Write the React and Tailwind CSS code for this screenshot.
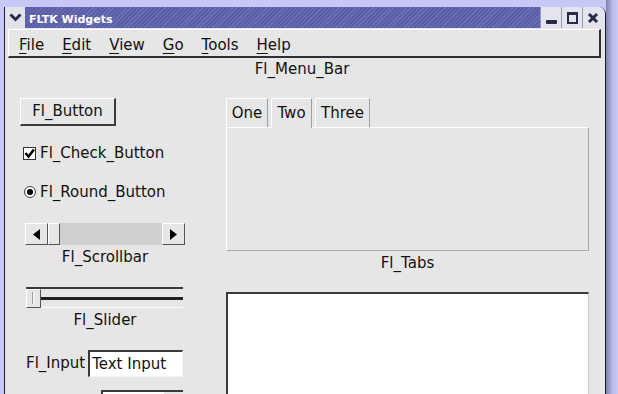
import React from 'react';

const FONT = { fontFamily: '"DejaVu Sans", Verdana, sans-serif' };

function MenuItem({ first, rest }) {
    return (
        <span className="text-[15px] text-[#111] leading-none">
            <span className="underline underline-offset-[3px] decoration-1">{first}</span>
            {rest}
        </span>
    );
}

function TitleButton({ children }) {
    return (
        <div className="w-[21px] h-full bg-[#e4e4ec] border-l border-[#9a9ab8] flex items-center justify-center">
            {children}
        </div>
    );
}

const raised = 'border-t border-l border-white border-b border-r border-b-[#555] border-r-[#555]';

export default function App() {
    return (
        <div className="w-[618px] h-[394px] overflow-hidden bg-[#c8c8f6] flex" style={FONT}>
            {/* window */}
            <div className="ml-[4px] mt-[7px] w-[602px] h-[400px] shrink-0 bg-[#e6e6e6] border-l border-r border-[#1c1c2c] rounded-tr-[7px] overflow-hidden">
                {/* title bar */}
                <div className="h-[21px] flex items-center bg-[repeating-linear-gradient(135deg,#5a5ea6_0px,#5a5ea6_2px,#6d71b8_2px,#6d71b8_3px)]">
                    <div className="w-[20px] h-[21px] bg-[#e2e2ea] flex items-center justify-center">
                        <svg width="13" height="9" viewBox="0 0 13 9">
                            <path d="M1.5 1.5 L6.5 6.5 L11.5 1.5" stroke="#2a2a48" strokeWidth="3" fill="none" />
                        </svg>
                    </div>
                    <span className="ml-[4px] mt-[3px] text-[11px] font-bold text-white leading-none">FLTK Widgets</span>
                    <div className="ml-auto flex h-[21px]">
                        <TitleButton>
                            <div className="w-[11px] h-[4px] bg-[#2a2a48] rounded-[1px] mt-[8px]" />
                        </TitleButton>
                        <TitleButton>
                            <div className="w-[11px] h-[12px] border-2 border-t-[3px] border-[#2a2a48]" />
                        </TitleButton>
                        <TitleButton>
                            <svg width="12" height="12" viewBox="0 0 12 12">
                                <path d="M2 2 L10 10 M10 2 L2 10" stroke="#2a2a48" strokeWidth="3" />
                            </svg>
                        </TitleButton>
                        <div className="w-[2px] bg-[#e4e4ec]" />
                    </div>
                </div>

                {/* menu bar */}
                <div className="mt-[1px] ml-[3px] w-[593px] h-[29px] pt-[4px] border-t border-l border-white border-b-2 border-r-2 border-b-[#303030] border-r-[#303030] flex items-center gap-[18px] pl-[10px]">
                    <MenuItem first="F" rest="ile" />
                    <MenuItem first="E" rest="dit" />
                    <MenuItem first="V" rest="iew" />
                    <MenuItem first="G" rest="o" />
                    <MenuItem first="T" rest="ools" />
                    <MenuItem first="H" rest="elp" />
                </div>
                <div className="mt-[1px] h-[20px] flex items-center justify-center text-[15px] text-[#111] pr-[6px]">Fl_Menu_Bar</div>

                {/* body */}
                <div className="mt-[19px] flex pl-[15px]">
                    {/* left column */}
                    <div className="w-[166px] flex flex-col">
                        <div className="w-[96px] h-[28px] shrink-0 border-t border-l border-white border-b-2 border-r-2 border-b-[#3a3a3a] border-r-[#3a3a3a] flex items-center justify-center text-[15px] text-[#111]">
                            Fl_Button
                        </div>

                        <div className="mt-[17px] h-[20px] flex items-center pl-[3px]">
                            <div className="w-[13px] h-[13px] bg-white border border-[#333] flex items-center justify-center">
                                <svg width="11" height="11" viewBox="0 0 11 11">
                                    <path d="M1.5 5 L4.5 8.5 L10 1.5" stroke="#000" strokeWidth="2.6" fill="none" />
                                </svg>
                            </div>
                            <span className="ml-[4px] text-[15px] text-[#111]">Fl_Check_Button</span>
                        </div>

                        <div className="mt-[19px] h-[20px] flex items-center pl-[4px]">
                            <div className="w-[12px] h-[12px] rounded-full bg-[#f4f4f4] border border-[#444] flex items-center justify-center">
                                <div className="w-[6px] h-[6px] rounded-full bg-black" />
                            </div>
                            <span className="ml-[4px] text-[15px] text-[#111]">Fl_Round_Button</span>
                        </div>

                        {/* scrollbar */}
                        <div className="mt-[21px] ml-[5px] w-[160px] h-[22px] flex bg-[#d0d0d0]">
                            <div className={`w-[23px] h-full bg-[#e6e6e6] ${raised} flex items-center justify-center`}>
                                <svg width="7" height="11" viewBox="0 0 7 11"><path d="M7 0 L0 5.5 L7 11 Z" fill="#000" /></svg>
                            </div>
                            <div className={`w-[12px] h-full bg-[#e6e6e6] ${raised}`} />
                            <div className="flex-1" />
                            <div className={`w-[23px] h-full bg-[#e6e6e6] ${raised} flex items-center justify-center`}>
                                <svg width="7" height="11" viewBox="0 0 7 11"><path d="M0 0 L7 5.5 L0 11 Z" fill="#000" /></svg>
                            </div>
                        </div>
                        <div className="mt-[4px] ml-[5px] w-[160px] h-[16px] flex items-center justify-center text-[15px] text-[#111]">Fl_Scrollbar</div>

                        {/* slider */}
                        <div className="mt-[22px] ml-[6px] w-[157px] h-[21px] border-t-2 border-t-[#3a3a3a] border-b border-b-white flex items-center">
                            <div className={`w-[15px] h-[19px] bg-[#e6e6e6] ${raised} flex items-center justify-center shrink-0`}>
                                <div className="w-[3px] h-[12px] border-l border-[#a0a0a0] bg-[#f2f2f2]" />
                            </div>
                            <div className="flex-1 h-[3px] bg-[#202020] mt-[1px]" />
                        </div>
                        <div className="mt-[4px] ml-[5px] w-[160px] h-[16px] flex items-center justify-center text-[15px] text-[#111]">Fl_Slider</div>

                        {/* input */}
                        <div className="mt-[22px] h-[27px] flex items-center pl-[6px]">
                            <span className="text-[15px] text-[#111]">Fl_Input</span>
                            <div className="ml-[3px] w-[95px] h-[27px] bg-white border-t-2 border-l-2 border-[#3a3a3a] border-b border-r border-b-[#f4f4f4] border-r-[#f4f4f4] flex items-center pl-[2px] text-[15px] text-[#111]">
                                Text Input
                            </div>
                        </div>

                        <div className="mt-[13px] ml-[81px] w-[82px] h-[24px] bg-white border-t-2 border-l-2 border-[#3a3a3a] flex justify-end">
                            <div className="w-[20px] h-full bg-[#e6e6e6] border-l border-white" />
                        </div>
                    </div>

                    {/* right column */}
                    <div className="ml-[40px] w-[363px] flex flex-col">
                        <div className="h-[29px] flex items-end gap-[3px]">
                            <div className="w-[42px] h-[29px] border-t border-l border-white border-r border-r-[#a0a0a0] flex items-center justify-center text-[15px] text-[#111]">One</div>
                            <div className="w-[41px] h-[30px] -mb-px relative z-10 bg-[#e6e6e6] border-t border-l border-white border-r border-r-[#a0a0a0] flex items-center justify-center text-[15px] text-[#111]">Two</div>
                            <div className="w-[55px] h-[29px] border-t border-l border-white border-r border-r-[#a0a0a0] flex items-center justify-center text-[15px] text-[#111]">Three</div>
                        </div>
                        <div className="h-[124px] border-t border-l border-white border-b border-r border-b-[#a8a8a8] border-r-[#a8a8a8]" />
                        <div className="mt-[4px] h-[16px] flex items-center justify-center text-[15px] text-[#111]">Fl_Tabs</div>
                        <div className="mt-[21px] h-[120px] bg-white border-t-2 border-l-2 border-[#3a3a3a] border-r border-r-[#c8c8c8]" />
                    </div>
                </div>
            </div>
            {/* right shadow edge */}
            <div className="flex-1 bg-[linear-gradient(90deg,#8080b0,#c0c0f0_60%,#c8c8f6)]" />
        </div>
    );
}
